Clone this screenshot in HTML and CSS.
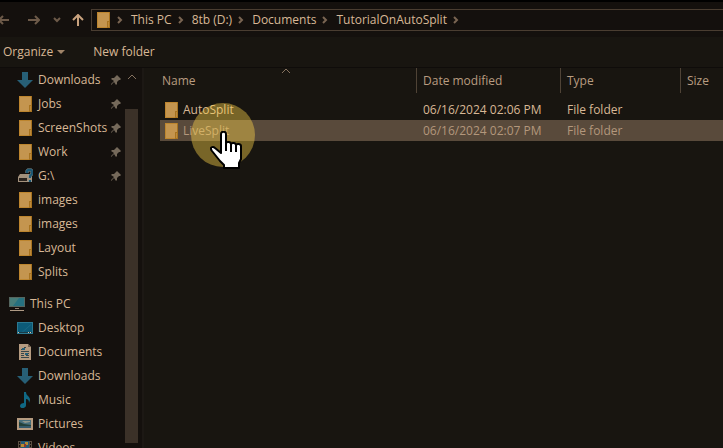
FILE: index.html
```html
<!DOCTYPE html>
<html lang="en">
<head>
<meta charset="utf-8">
<title>TutorialOnAutoSplit</title>
<link rel="stylesheet" href="styles.css">
</head>
<body>
<svg class="defs" aria-hidden="true">
  <symbol id="folder" viewBox="0 0 16 16"><path d="M2 0h13v16H2z" fill="#bd852e"/><path d="M3 1h11v14H3z" fill="#c4954f"/><path d="M14 0h1v9h-1z" fill="#a8731f"/><path d="M12 9h3v7h-3z" fill="#a8731f"/><path d="M13 10h1v5h-1z" fill="#bd8a3c"/></symbol>
  <symbol id="down" viewBox="0 0 16 16"><path d="M5 0h6v8h5l-8 8-8-8h5z" fill="#275f76"/></symbol>
  <symbol id="pin" viewBox="0 0 12 12"><path d="M7 1l4 4-1 1h-1L7 8v2l-1 1-2-3-3 3 0-1 3-3-3-2 1-1h2l2-2V2z" fill="#75695a"/></symbol>
  <symbol id="drive" viewBox="0 0 16 16"><path d="M3 6h9l3 3v5H1V9z" fill="#a3917c"/><path d="M2 10h8v3H2z" fill="#2b241e"/><path d="M10 5V3l1-1h3l1 1v3l-2 2v2M13 12v2" fill="none" stroke="#7f99a0" stroke-width="3"/><path d="M10 5V3l1-1h3l1 1v3l-2 2v2M13 12v2" fill="none" stroke="#1b5672" stroke-width="2"/></symbol>
  <symbol id="pc" viewBox="0 0 16 16"><path d="M0 1h16v10H0z" fill="#55665f"/><path d="M1 2h14v8H1z" fill="#26717f"/><path d="M1 2h9l-6 8H1z" fill="#477c78"/><path d="M6 12h4v1H6z" fill="#8c7c6c"/><path d="M1 14h14v1H1z" fill="#b09b85"/></symbol>
  <symbol id="desktop" viewBox="0 0 16 16"><path d="M0 2h16v12H0z" fill="#2b7890"/><path d="M1 3h14v9H1z" fill="#0c5b78"/><path d="M14 4v1L6 12H5z" fill="#1d6b86"/><path d="M1 12h14v1H1z" fill="#173b48"/><path d="M1 12h1v1H1zM11 12h1v1h-1zM13 12h1v1h-1z" fill="#d8c3a5"/></symbol>
  <symbol id="doc" viewBox="0 0 16 16"><path d="M2 0h9l3 3v13H2z" fill="#b59b80"/><path d="M11 0v3h3z" fill="#705e4e"/><path d="M4 5.500h3M7 3.500h2M4 7.500h8M4 9.500h3M9 9.500h3M4 11.500h3M9 11.500h3M4 13.500h8" stroke="#37464a"/><path d="M5 4h3v2H5zM8 9h3v2H8z" fill="#24617a"/></symbol>
  <symbol id="music" viewBox="0 0 16 16"><path d="M7 0h2c0 4 4 4 4 8l-1 3c0-3-1-4-3-4v6c0 4-6 4-6 1 0-2 2-3 4-3z" fill="#106884"/></symbol>
  <symbol id="picture" viewBox="0 0 16 16"><path d="M0 2h16v12H0z" fill="#b59b80"/><path d="M2 4h12v8H2z" fill="#476f7c"/><path d="M5 5h8v1l-5 1z" fill="#91988c"/><path d="M2 6l5 2 7 1v1H2z" fill="#23413a"/><path d="M2 10h12v2H2z" fill="#33596a"/></symbol>
  <symbol id="video" viewBox="0 0 16 16"><path d="M1 1h14v14H1z" fill="#5b4f43"/><path d="M2 2h1v2H2zM2 5h1v2H2zM2 8h1v2H2zM13 2h1v2h-1zM13 5h1v2h-1zM13 8h1v2h-1z" fill="#14100d"/><path d="M4 1h8v14H4z" fill="#235a77"/><path d="M4 4h3v3H4zM8 2h3v3H8z" fill="#b58a32"/><path d="M7 4h2v3H7z" fill="#8e3630"/></symbol>
</svg>

<header class="address">
  <button class="nav-btn back dim" aria-label="Back"><svg viewBox="0 0 12 12"><path d="M11 6H1M5 2L1 6l4 4"/></svg></button>
  <button class="nav-btn forward dim" aria-label="Forward"><svg viewBox="0 0 12 12"><path d="M0 6h11M7 2l4 4-4 4"/></svg></button>
  <button class="nav-btn recent dim" aria-label="Recent locations"><svg viewBox="0 0 12 12"><path d="M3 4l3 3 3-3"/></svg></button>
  <button class="nav-btn up" aria-label="Up"><svg viewBox="0 0 12 12"><path d="M6 12V1M1 6l5-5 5 5"/></svg></button>
  <nav class="crumbs" aria-label="Location">
    <svg class="icon"><use href="#folder"/></svg>
    <svg class="chev" viewBox="0 0 6 8"><path d="M1 1l3 3-3 3"/></svg>
    <a href="#">This PC</a>
    <svg class="chev" viewBox="0 0 6 8"><path d="M1 1l3 3-3 3"/></svg>
    <a href="#">8tb (D:)</a>
    <svg class="chev" viewBox="0 0 6 8"><path d="M1 1l3 3-3 3"/></svg>
    <a href="#">Documents</a>
    <svg class="chev" viewBox="0 0 6 8"><path d="M1 1l3 3-3 3"/></svg>
    <a href="#">TutorialOnAutoSplit</a>
    <svg class="chev" viewBox="0 0 6 8"><path d="M1 1l3 3-3 3"/></svg>
  </nav>
</header>

<div class="toolbar">
  <button>Organize <svg class="caret" viewBox="0 0 8 4"><path d="M0 0h8L4 4z"/></svg></button>
  <button>New folder</button>
</div>

<div class="main">
  <nav class="tree" aria-label="Folders">
    <ul>
      <li><a href="#"><svg class="icon"><use href="#down"/></svg>Downloads</a><svg class="pin"><use href="#pin"/></svg></li>
      <li><a href="#"><svg class="icon"><use href="#folder"/></svg>Jobs</a><svg class="pin"><use href="#pin"/></svg></li>
      <li><a href="#"><svg class="icon"><use href="#folder"/></svg>ScreenShots</a><svg class="pin"><use href="#pin"/></svg></li>
      <li><a href="#"><svg class="icon"><use href="#folder"/></svg>Work</a><svg class="pin"><use href="#pin"/></svg></li>
      <li><a href="#"><svg class="icon"><use href="#drive"/></svg>G:\</a><svg class="pin"><use href="#pin"/></svg></li>
      <li><a href="#"><svg class="icon"><use href="#folder"/></svg>images</a></li>
      <li><a href="#"><svg class="icon"><use href="#folder"/></svg>images</a></li>
      <li><a href="#"><svg class="icon"><use href="#folder"/></svg>Layout</a></li>
      <li><a href="#"><svg class="icon"><use href="#folder"/></svg>Splits</a></li>
    </ul>
    <ul>
      <li class="root"><a href="#"><svg class="icon"><use href="#pc"/></svg>This PC</a></li>
      <li><a href="#"><svg class="icon"><use href="#desktop"/></svg>Desktop</a></li>
      <li><a href="#"><svg class="icon"><use href="#doc"/></svg>Documents</a></li>
      <li><a href="#"><svg class="icon"><use href="#down"/></svg>Downloads</a></li>
      <li><a href="#"><svg class="icon"><use href="#music"/></svg>Music</a></li>
      <li><a href="#"><svg class="icon"><use href="#picture"/></svg>Pictures</a></li>
      <li><a href="#"><svg class="icon"><use href="#video"/></svg>Videos</a></li>
    </ul>
  </nav>
  <div class="scrollbar">
    <button class="scroll-up" aria-label="Scroll up"><svg viewBox="0 0 10 6"><path d="M1 5l4-4 4 4"/></svg></button>
    <div class="thumb"></div>
  </div>
  <main class="files">
    <svg class="sort" viewBox="0 0 10 6"><path d="M1 5l4-4 4 4"/></svg>
    <table>
      <colgroup><col class="c-name"><col class="c-date"><col class="c-type"><col></colgroup>
      <thead><tr><th><span>Name</span></th><th><span>Date modified</span></th><th><span>Type</span></th><th><span>Size</span></th></tr></thead>
      <tbody>
        <tr><td><div class="file"><svg class="icon"><use href="#folder"/></svg>AutoSplit</div></td><td>06/16/2024 02:06 PM</td><td>File folder</td><td></td></tr>
        <tr class="selected"><td><div class="file"><svg class="icon"><use href="#folder"/></svg>LiveSplit</div></td><td>06/16/2024 02:07 PM</td><td>File folder</td><td></td></tr>
      </tbody>
    </table>
    <div class="halo"></div>
    <svg class="hand" viewBox="0 0 32 38"><path d="M11 3c0-3 5-3 5 0v9c1-2 5-1 5 1 1-2 5-1 5 1 1-2 5-1 5 1v13l-2 4v5H14v-3l-4-4-8-10c-3-4 1-5 3-3l6 5z" fill="#fff" stroke="#000" stroke-width="2" stroke-linejoin="round"/><path d="M16 11v9M21 13v8M26 14v7" stroke="#000" stroke-width="2"/></svg>
  </main>
</div>
</body>
</html>
```
FILE: styles.css
```css
* { box-sizing: border-box; }
body {
  margin: 0;
  height: 100vh;
  overflow: hidden;
  display: flex;
  flex-direction: column;
  background: #181510;
  border-top: 2px solid #000;
  color: #d8b896;
  font: 12px/16px "Open Sans", "Noto Sans", sans-serif;
}
a { color: inherit; text-decoration: none; }
button { padding: 0; border: 0; background: none; color: inherit; font: inherit; }
ul { margin: 0; padding: 0; list-style: none; }
svg { display: block; flex: none; }
.defs { position: absolute; width: 0; height: 0; }
.icon { width: 16px; height: 16px; }

.address { display: flex; align-items: center; height: 35px; background: #14100d; }
.nav-btn svg { width: 12px; height: 12px; fill: none; stroke: #c9a27e; stroke-width: 2; }
.dim svg { stroke: #6d5a49; }
.back { margin-left: -2px; }
.forward { margin-left: 18px; }
.recent { margin-left: 11px; }
.up { margin-left: 9px; }
.crumbs {
  flex: 1;
  display: flex;
  align-items: center;
  height: 22px;
  margin-left: 7px;
  padding-left: 3px;
  border: 1px solid #4a3d31;
  border-right: 0;
}
.chev { width: 6px; height: 8px; margin: 0 8px 0 6px; fill: none; stroke: #7a6552; stroke-width: 2; }

.toolbar { display: flex; align-items: center; gap: 28px; height: 30px; padding-left: 3px; }
.toolbar button { display: flex; align-items: center; gap: 4px; }
.caret { width: 8px; height: 4px; fill: #a08468; }

.main { flex: 1; min-height: 0; display: flex; border-top: 1px solid #0f0c0a; }
.tree { width: 125px; overflow: hidden; background: #14100d; }
.tree ul + ul { margin-top: 8px; }
.tree li { display: flex; align-items: center; justify-content: space-between; height: 24px; padding: 0 3px 0 17px; }
.tree .root { padding-left: 9px; }
.tree a { display: flex; align-items: center; gap: 5px; }
.pin { width: 12px; height: 12px; }
.scrollbar { display: flex; flex-direction: column; width: 19px; padding: 0 4px 5px 0; background: #14100d; border-right: 2px solid #1c1814; }
.scroll-up { display: flex; justify-content: center; padding-top: 6px; height: 41px; }
.scroll-up svg { width: 10px; height: 6px; fill: none; stroke: #86725f; }
.thumb { flex: 1; background: #3b3128; }

.files { position: relative; flex: 1; padding-left: 16px; }
.sort { position: absolute; left: 137px; top: 0; width: 10px; height: 6px; fill: none; stroke: #86725f; }
table { width: 100%; border-collapse: collapse; table-layout: fixed; }
.c-name { width: 256px; }
.c-date { width: 144px; }
.c-type { width: 120px; }
th { height: 31px; padding: 0; font-weight: 400; text-align: left; vertical-align: top; color: #b89c80; }
th span { display: flex; align-items: center; height: 25px; padding-left: 6px; border-left: 1px solid #4f4336; }
th:first-child span { padding-left: 2px; border: 0; }
td { height: 21px; padding: 0 0 0 7px; white-space: nowrap; }
td:first-child { padding-left: 3px; }
.file { display: flex; align-items: center; gap: 4px; }
.selected { background: #594a3b; color: #b3977c; }
.halo { position: absolute; left: 47px; top: 35px; width: 64px; height: 64px; border-radius: 50%; background: rgba(255, 211, 73, .42); }
.hand { position: absolute; left: 66px; top: 63px; width: 32px; height: 38px; }
```
